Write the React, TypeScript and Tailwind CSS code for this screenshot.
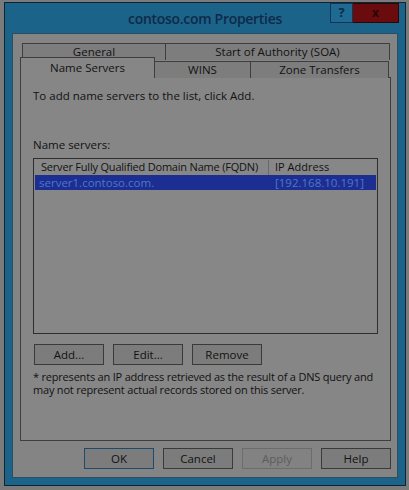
const font = { fontFamily: '"Open Sans", "Noto Sans", sans-serif' };

function Btn({ label, className = '' }: { label: string; className?: string }) {
  return (
    <div
      className={`w-[70px] h-[21px] flex items-center justify-center border text-[11.5px] ${className}`}
    >
      {label}
    </div>
  );
}

export default function App() {
  return (
    <div className="w-[409px] h-[490px] bg-[#7b7b7b] pt-[2px] pl-[4px]" style={font}>
      <div className="w-[402px] h-[484px] bg-[#1c6389] border border-[#0c2434] flex flex-col">
        {/* title bar */}
        <div className="relative h-[30px] flex items-center justify-center">
          <span className="text-[14px] font-semibold text-[#0e2a48] tracking-[-0.3px]">contoso.com Properties</span>
          <div className="absolute top-0 right-[6px] flex">
            <div className="w-[23px] h-[20px] bg-[#1f6a92] border border-[#12374f] flex items-center justify-center text-[13px] font-bold text-[#0d2a44]">
              ?
            </div>
            <div className="w-[46px] h-[20px] bg-[#6a0b0d] border border-[#2a0608] border-l-0 flex items-center justify-center text-[12px] font-bold text-[#2a0506]">
              x
            </div>
          </div>
        </div>

        {/* client */}
        <div className="flex-1 mx-[7px] mb-[7px] bg-[#848484] border border-[#2b4e62] flex flex-col text-[#121212] whitespace-nowrap">
          <div className="ml-[7px] mt-[9px] w-[371px]">
            {/* tab row 1 */}
            <div className="flex ml-[2px] h-[17px] text-[11.5px]">
              <div className="w-[144px] border border-[#3e3e3e] border-b-0 bg-[#7d7d7d] flex items-center justify-center">
                General
              </div>
              <div className="w-[224px] border border-[#3e3e3e] border-l-0 border-b-0 bg-[#7d7d7d] flex items-center justify-center">
                Start of Authority (SOA)
              </div>
            </div>
            {/* tab row 2 */}
            <div className="flex items-end h-[18px] -mb-px text-[11.5px]">
              <div className="relative z-10 w-[135px] h-[21px] border border-[#3e3e3e] border-b-0 bg-[#868686] flex items-start justify-center pt-[1px]">
                Name Servers
              </div>
              <div className="w-[96px] h-[17px] border-t border-r border-[#3e3e3e] bg-[#7d7d7d] flex items-center justify-center">
                WINS
              </div>
              <div className="w-[138px] h-[17px] border-t border-r border-[#3e3e3e] bg-[#7d7d7d] flex items-center justify-center">
                Zone Transfers
              </div>
            </div>
            {/* panel */}
            <div className="h-[364px] border border-[#3e3e3e] bg-[#868686] pl-[12px] pt-[10px] text-[11.5px] flex flex-col">
              <div className="leading-[16px]">To add name servers to the list, click Add.</div>
              <div className="mt-[33px] leading-[16px]">Name servers:</div>
              <div className="mt-[5px] w-[345px] h-[176px] border border-[#2e2e2e] bg-[#878787] px-[1px] pt-[1px]">
                <div className="flex h-[15px] items-center">
                  <div className="w-[234px] pl-[6px] border-r border-[#6a6a6a] h-full flex items-center text-[11px] tracking-[-0.2px]">
                    Server Fully Qualified Domain Name (FQDN)
                  </div>
                  <div className="pl-[6px] text-[11px]">IP Address</div>
                </div>
                <div className="flex h-[15px] items-center bg-[#1d2e93] text-[#4f78c2]">
                  <div className="w-[234px] pl-[4px]">server1.contoso.com.</div>
                  <div className="pl-[6px]">[192.168.10.191]</div>
                </div>
              </div>
              <div className="mt-[10px] flex gap-[9px] ml-[1px]">
                <Btn label="Add..." className="bg-[#7c7c7c] border-[#3a3a3a]" />
                <Btn label="Edit..." className="bg-[#7c7c7c] border-[#3a3a3a]" />
                <Btn label="Remove" className="bg-[#7c7c7c] border-[#3a3a3a]" />
              </div>
              <div className="mt-[5px] text-[11px] tracking-[-0.2px] flex flex-col">
                <span className="leading-[13px]">* represents an IP address retrieved as the result of a DNS query and</span>
                <span className="leading-[13px]">may not represent actual records stored on this server.</span>
              </div>
            </div>
          </div>
          {/* bottom buttons */}
          <div className="mt-[7px] flex justify-end gap-[9px] pr-[6px]">
            <Btn label="OK" className="bg-[#7c7c7c] border-[#1e4a6c]" />
            <Btn label="Cancel" className="bg-[#7c7c7c] border-[#3a3a3a]" />
            <Btn label="Apply" className="bg-[#828282] border-[#6c6c6c] text-[#5c5c5c]" />
            <Btn label="Help" className="bg-[#7c7c7c] border-[#3a3a3a]" />
          </div>
        </div>
      </div>
    </div>
  );
}
